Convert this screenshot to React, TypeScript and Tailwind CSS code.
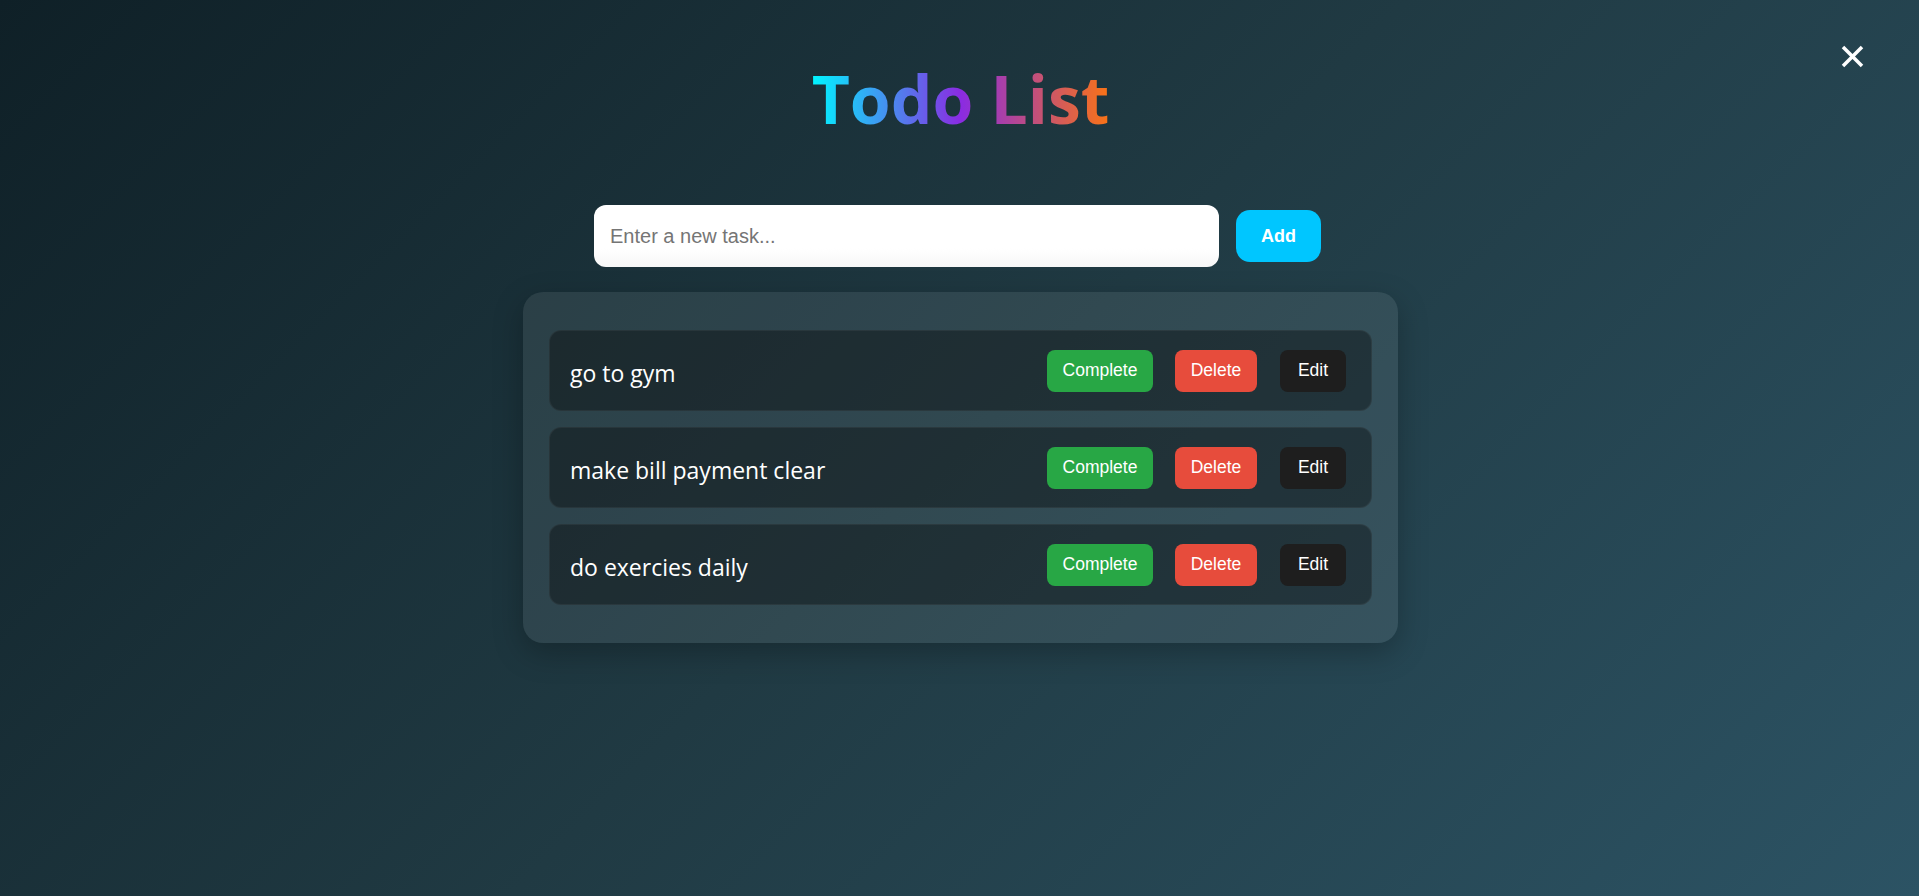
import { useState } from 'react';

type Todo = { id: number; text: string; done: boolean };

const initial: Todo[] = [
  { id: 1, text: 'go to gym', done: false },
  { id: 2, text: 'make bill payment clear', done: false },
  { id: 3, text: 'do exercies daily', done: false },
];

export default function App() {
  const [todos, setTodos] = useState<Todo[]>(initial);
  const [task, setTask] = useState('');

  const add = () => {
    if (!task.trim()) return;
    setTodos([...todos, { id: Date.now(), text: task.trim(), done: false }]);
    setTask('');
  };

  return (
    <div className="relative min-h-screen w-full bg-[linear-gradient(135deg,#0f2027,#203a43,#2c5364)] font-['Open_Sans',sans-serif]">
      <button className="absolute top-[45px] right-[55px] text-white">
        <svg width="23" height="23" viewBox="0 0 23 23" fill="none" stroke="currentColor" strokeWidth="3.5">
          <path d="M2 2 21 21M21 2 2 21" />
        </svg>
      </button>

      <div className="flex flex-col items-center pt-[65px] pl-[2px]">
        <h1 className="inline-block bg-[linear-gradient(90deg,#00f5ff,#8a2be2,#f97316)] bg-clip-text text-[66px] leading-[66px] font-bold text-transparent">
          Todo List
        </h1>

        <div className="mt-[74px] mr-[6px] flex items-center gap-[17px]">
          <input
            value={task}
            onChange={(e) => setTask(e.target.value)}
            placeholder="Enter a new task..."
            className="h-[62px] w-[625px] rounded-[12px] bg-[linear-gradient(180deg,#ffffff_70%,#f7f7f7)] px-4 font-['Liberation_Sans',Arial,sans-serif] text-[20px] text-gray-800 outline-none placeholder:text-[#757575]"
          />
          <button
            onClick={add}
            className="h-[52px] w-[85px] rounded-[14px] bg-[#00c6ff] font-['Liberation_Sans',Arial,sans-serif] text-[18px] font-bold text-white"
          >
            Add
          </button>
        </div>

        <div className="mt-[25px] flex w-[875px] flex-col gap-4 rounded-[20px] bg-white/8 px-[26px] py-[38px] shadow-[0_10px_30px_rgba(0,0,0,0.25)]">
          {todos.map((t) => (
            <div
              key={t.id}
              className="flex h-[81px] items-center justify-between rounded-[12px] border border-white/5 bg-black/35 pl-5 pr-[25px]"
            >
              <span className={`pt-[6px] text-[23px] text-white ${t.done ? 'line-through opacity-60' : ''}`}>{t.text}</span>
              <div className="flex items-center font-['Liberation_Sans',Arial,sans-serif] text-[17.5px] text-white">
                <button
                  onClick={() => setTodos(todos.map((x) => (x.id === t.id ? { ...x, done: !x.done } : x)))}
                  className="h-[42px] w-[106px] rounded-lg bg-[#28a745]"
                >
                  Complete
                </button>
                <button
                  onClick={() => setTodos(todos.filter((x) => x.id !== t.id))}
                  className="ml-[22px] h-[42px] w-[82px] rounded-lg bg-[#e74c3c]"
                >
                  Delete
                </button>
                <button className="ml-[23px] h-[42px] w-[66px] rounded-lg bg-[#1e1e1e]">Edit</button>
              </div>
            </div>
          ))}
        </div>
      </div>
    </div>
  );
}
